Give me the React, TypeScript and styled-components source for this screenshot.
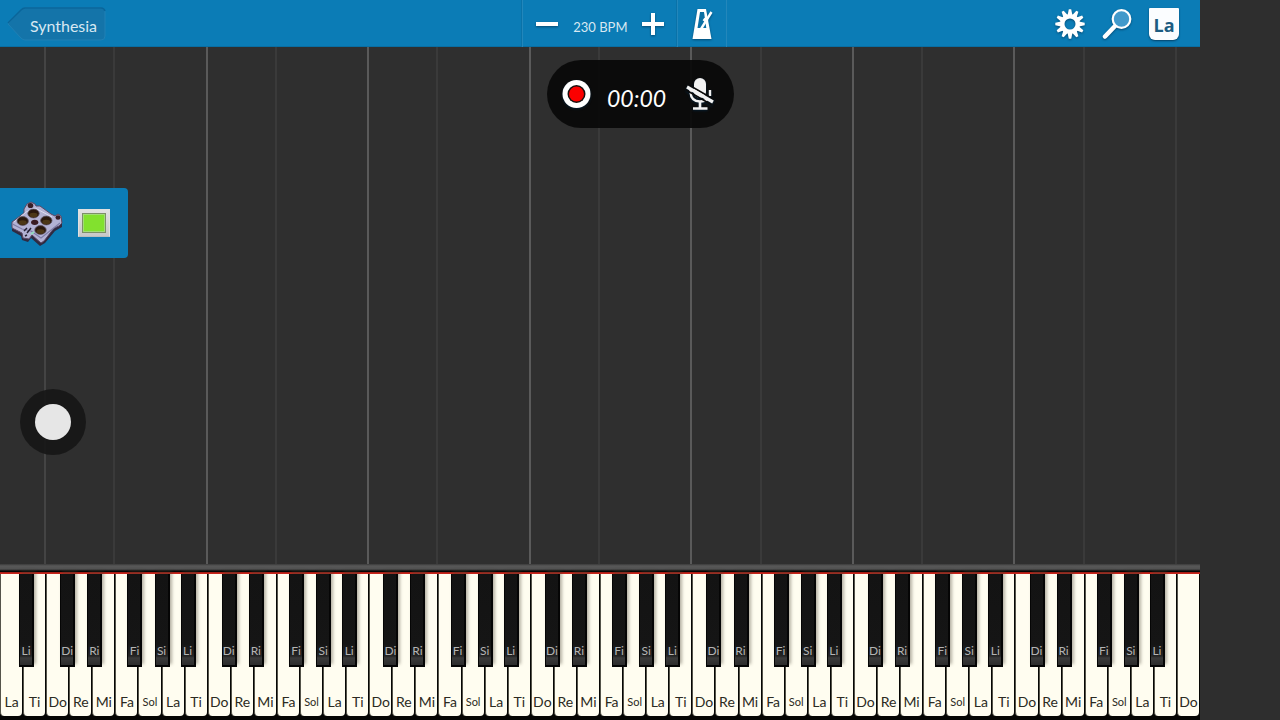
import React from 'react';
import styled, { createGlobalStyle } from 'styled-components';

const GlobalStyle = createGlobalStyle`
  *, *::before, *::after { box-sizing: border-box; }
  html, body { margin: 0; background: #2e2e2e; }
  body { font-family: Lato, "Liberation Sans", sans-serif; color: #fff; }
  button { font: inherit; color: inherit; border: 0; background: none; padding: 0; cursor: pointer; }
  svg { display: block; }
`;

const Screen = styled.main`
  position: relative;
  display: flex;
  flex-direction: column;
  min-height: 100vh;
  padding-right: 80px;
`;

const Toolbar = styled.header`
  display: grid;
  grid-template-columns: 21fr auto 19fr;
  height: 47px;
  background: #0b7cb6;
  box-shadow: inset 0 -1px 0 #096ea3;
`;

const ToolbarStart = styled.div`
  display: flex;
  align-items: center;
  padding-left: 7px;
`;

const ToolbarEnd = styled.div`
  display: flex;
  align-items: center;
  justify-content: flex-end;
  gap: 16px;
  padding-right: 21px;
`;

const BackButton = styled.button`
  display: grid;
  width: 99px;
  height: 34px;
  color: #d8e8f2;
  font-size: 16px;
  line-height: 34px;

  > * { grid-area: 1 / 1; }
  span { padding: 2px 0 0 14px; }
`;

const ToolbarSection = styled.div<{ $gap?: number }>`
  display: flex;
  align-items: center;
  gap: ${(p) => p.$gap ?? 0}px;
  padding: 1px 13px 0;
  border-left: 1px solid #2387bb;
  box-shadow: -1px 0 0 #0a72a8;
`;

const Centre = styled.div`
  display: flex;
  border-right: 1px solid #2387bb;
`;

const Tempo = styled.output`
  width: 60px;
  padding-top: 5px;
  color: #d8e8f2;
  font-size: 13px;
  line-height: 16px;
  text-align: center;
  white-space: nowrap;
`;

const IconButton = styled.button`
  display: flex;
  align-items: center;
  justify-content: center;

  svg { filter: drop-shadow(0 1px 1px rgba(0, 40, 70, 0.6)); }
`;

const LabelToggle = styled.button`
  width: 30px;
  height: 32px;
  padding-top: 2px;
  border-radius: 1px 1px 6px 6px;
  background: #fbfdff;
  box-shadow: 0 1px 2px rgba(0, 40, 70, 0.7);
  color: #1c5c82;
  font: 700 18px/28px "Open Sans", sans-serif;
`;

const Stage = styled.section`
  position: relative;
  display: flex;
  flex: 1;
  min-height: 420px;
  background: #2f2f2f;
`;

const laneColours = { soft: '#444', strong: '#5a5a5a', faint: '#3a3a3a', none: 'transparent' };

const Lane = styled.div<{ $keys: number; $edge: keyof typeof laneColours }>`
  flex: ${(p) => p.$keys} 1 0;
  box-shadow: inset -2px 0 0 ${(p) => laneColours[p.$edge]};
`;

const InstrumentPanel = styled.div`
  position: absolute;
  top: 141px;
  left: 0;
  display: flex;
  align-items: center;
  gap: 14px;
  width: 128px;
  height: 70px;
  padding-left: 10px;
  border-radius: 0 4px 4px 0;
  background: #0b7cb6;
`;

const PadToggle = styled.input`
  appearance: none;
  width: 32px;
  height: 28px;
  margin: 0;
  padding: 3px;
  border: 1px solid #e0e0e0;
  border-bottom-color: #bcbcbc;
  background: linear-gradient(#e2e2e2, #c8c8c8);

  &::before {
    content: '';
    display: block;
    height: 20px;
    border: 1px solid #7d8f68;
    background: #b5ec8a;
    box-shadow: inset 0 0 0 1px #a2dd75;
  }
  &:checked::before { background: #82e12e; }
`;

const FloatingKnob = styled.button`
  position: absolute;
  top: 342px;
  left: 20px;
  display: flex;
  align-items: center;
  justify-content: center;
  width: 66px;
  height: 66px;
  border-radius: 50%;
  background: rgba(22, 22, 22, 0.9);

  &::before {
    content: '';
    width: 36px;
    height: 36px;
    border-radius: 50%;
    background: #e6e6e6;
  }
`;

const Recorder = styled.div`
  position: absolute;
  top: 60px;
  left: 50%;
  display: flex;
  align-items: center;
  gap: 16px;
  width: 187px;
  height: 68px;
  margin-left: -93px;
  padding-left: 15px;
  border-radius: 34px;
  background: rgba(10, 10, 10, 0.94);
`;

const Elapsed = styled.time`
  width: 63px;
  padding-top: 8px;
  font-size: 23px;
  font-style: italic;
  line-height: 28px;
`;

const FallBoard = styled.div`
  height: 9px;
  background: linear-gradient(#3a3a3a, #585858 2px, #525252 5px, #333 6px, #050505 7px);
  border-bottom: 1px solid #a81e16;
`;

const Keyboard = styled.div`
  display: flex;
  height: 147px;
  padding-bottom: 4px;
  background: #060604;
  border-top: 1px solid #c8261c;
`;

const KeySlot = styled.div`
  position: relative;
  display: flex;
  flex: 1 1 0;
  min-width: 0;
`;

const WhiteKey = styled.button<{ $small: boolean }>`
  flex: 1;
  min-width: 0;
  margin-right: 1px;
  padding-top: 113px;
  border-left: 1px solid #55544a;
  border-radius: 0 0 4px 4px;
  background: #fffdf0;
  color: #2b2a22;
  font-size: ${(p) => (p.$small ? 11 : 14)}px;
  line-height: 24px;
  white-space: nowrap;
`;

const BlackKey = styled.button<{ $shift: number }>`
  position: absolute;
  z-index: 1;
  top: 0;
  left: calc(100% - 7px + ${(p) => p.$shift}px);
  width: 15px;
  height: 93px;
  padding-top: 62px;
  border: solid #050505;
  border-width: 0 2px 2px 1px;
  background: linear-gradient(#131313 0, #151515 70px, #242424 82px, #3a3a3a 84px, #2a2a2a 92px);
  box-shadow: 2px -3px 3px rgba(70, 65, 50, 0.4);
  color: #b4b4b4;
  font-size: 12px;
  line-height: 16px;
  text-align: center;
`;

type Sharp = { name: string; shift: number };
const sharps: Record<string, Sharp> = {
  Do: { name: 'Di', shift: -2 },
  Re: { name: 'Ri', shift: 2 },
  Fa: { name: 'Fi', shift: -4 },
  Sol: { name: 'Si', shift: 0 },
  La: { name: 'Li', shift: 3 },
};

const octave = ['Do', 'Re', 'Mi', 'Fa', 'Sol', 'La', 'Ti'];
const notes = ['La', 'Ti', ...Array.from({ length: 7 }, () => octave).flat(), 'Do'];

const lanes: { keys: number; edge: keyof typeof laneColours }[] = [
  { keys: 2, edge: 'soft' },
  ...Array.from({ length: 6 }, () => [
    { keys: 3, edge: 'faint' as const },
    { keys: 4, edge: 'strong' as const },
  ]).flat(),
  { keys: 3, edge: 'faint' },
  { keys: 4, edge: 'faint' },
  { keys: 1, edge: 'none' },
];

const BackShape = () => (
  <svg width="99" height="34" viewBox="0 0 99 34" aria-hidden="true">
    <path d="M1 17 14 3Q16 1 18 1H94Q98 1 98 5V29Q98 33 94 33H18Q16 33 14 31Z" fill="#1474a9" stroke="#2080b4" />
    <path d="M1 16 14 3Q16 1 18 1H94Q97 1 98 4" fill="none" stroke="#0a659a" strokeWidth="1.500" />
  </svg>
);

const Bar = ({ plus = false }) => (
  <svg width="22" height="22" viewBox="0 0 22 22" fill="#fff" aria-hidden="true">
    <rect x="0" y="9" width="22" height="4" />
    {plus && <rect x="9" y="0" width="4" height="22" />}
  </svg>
);

const Metronome = () => (
  <svg width="22" height="32" viewBox="0 0 22 32" aria-hidden="true">
    <path d="M6.500 1H15L20.500 31H1.500Z" fill="#fff" />
    <path d="M9 4H13L15.300 20H6.500Z" fill="#0b6fa4" />
    <path d="M10 21 20.500 4" stroke="#fff" strokeWidth="2.400" />
    <path d="M12.500 11 16.500 14" stroke="#fff" strokeWidth="3" />
  </svg>
);

const Gear = () => (
  <svg width="30" height="30" viewBox="-15 -15 30 30" aria-hidden="true">
    {Array.from({ length: 12 }, (_, i) => (
      <path key={i} d="M-2.400 -9 -1.200 -14.700H1.200L2.400 -9Z" transform={`rotate(${i * 30})`} fill="#fff" />
    ))}
    <circle r="7.800" fill="none" stroke="#fff" strokeWidth="4.600" />
  </svg>
);

const Magnifier = () => (
  <svg width="32" height="32" viewBox="0 0 32 32" aria-hidden="true">
    <path d="M14.500 17.500 4 28.500" stroke="#fff" strokeWidth="4.500" strokeLinecap="round" />
    <circle cx="20.500" cy="11" r="8.800" fill="#4199cb" stroke="#fff" strokeWidth="2.200" />
  </svg>
);

const RecordMark = () => (
  <svg width="29" height="29" viewBox="0 0 29 29" aria-hidden="true">
    <circle cx="14.500" cy="14" r="14" fill="#fff" />
    <circle cx="14.500" cy="14" r="9" fill="#16100f" />
    <circle cx="14.500" cy="14" r="7.500" fill="#fb0000" />
  </svg>
);

const MutedMic = () => (
  <svg width="28" height="34" viewBox="0 0 28 34" aria-hidden="true">
    <path d="M8 7a6 6 0 0 1 12 0V15a6 6 0 0 1-12 0Z" fill="#f2f2f2" />
    <path d="M4.500 13V15Q5 24.500 14 24.500 19 24.500 21.500 22M24 19V13" fill="none" stroke="#f2f2f2" strokeWidth="2.400" />
    <path d="M14 24V31M7 31.500H21.500" stroke="#f2f2f2" strokeWidth="2.600" />
    <path d="M0 13 26 28M2 7.500 28 22.500" stroke="#0b0b0b" strokeWidth="1.600" />
    <path d="M1 10 27 25" stroke="#f2f2f2" strokeWidth="3.200" />
  </svg>
);

const DrumPad = () => (
  <svg width="54" height="48" viewBox="0 0 54 48" aria-hidden="true">
    <path d="M2 26V32L11 37 12 41 18 43 21 39 30 47 35 44 45 32 52 28V20L46 28Z" fill="#2f2b42" />
    <path d="M14 10 17 5 21 3 25 5 26 7 30 7 41 15 45 17 48 15 51 17 52 24 49 27 44 29 34 42 31 44 22 36 19 40 13 39 12 34 2 29V23L14 14Z" fill="#b3b2d4" stroke="#5b4763" />
    <path d="M2.500 25 12 30 21 32 31 39 50 24" fill="none" stroke="#7f7da6" strokeWidth="1.200" />
    <path d="M4 23 16 13 25 9 42 18" fill="none" stroke="#dddcf0" />
    <g fill="#2a180e" stroke="#5c5260" strokeWidth="0.800">
      <ellipse cx="23.500" cy="14.500" rx="5.700" ry="4.400" />
      <ellipse cx="12.700" cy="22" rx="5.700" ry="4.400" />
      <ellipse cx="36.300" cy="21.500" rx="5.700" ry="4.400" />
      <ellipse cx="30.500" cy="31" rx="5.700" ry="4.400" />
    </g>
    <g fill="#4c3717">
      <ellipse cx="23.500" cy="16" rx="4" ry="2.300" />
      <ellipse cx="12.700" cy="23.500" rx="4" ry="2.300" />
      <ellipse cx="36.300" cy="23" rx="4" ry="2.300" />
      <ellipse cx="30.500" cy="32.500" rx="4" ry="2.300" />
    </g>
    <ellipse cx="24.700" cy="23.300" rx="3.600" ry="2.600" fill="#3a1b22" />
    <ellipse cx="20.500" cy="6.500" rx="2.800" ry="2.600" fill="#371e26" />
    <ellipse cx="48" cy="18.500" rx="2.500" ry="2.200" fill="#371e26" />
    <path d="M14 32 17 29M17 34 21 29M15 37 17 36" stroke="#262033" strokeWidth="1.500" />
    <path d="M21 35 24 33" stroke="#8fe3bd" strokeWidth="1.600" />
  </svg>
);

export default function App() {
  return (
    <>
      <GlobalStyle />
      <Screen>
        <Toolbar>
          <ToolbarStart>
            <BackButton>
              <BackShape />
              <span>Synthesia</span>
            </BackButton>
          </ToolbarStart>
          <Centre>
            <ToolbarSection $gap={12}>
              <IconButton aria-label="Slower"><Bar /></IconButton>
              <Tempo>230 BPM</Tempo>
              <IconButton aria-label="Faster"><Bar plus /></IconButton>
            </ToolbarSection>
            <ToolbarSection>
              <IconButton aria-label="Metronome"><Metronome /></IconButton>
            </ToolbarSection>
          </Centre>
          <ToolbarEnd>
            <IconButton aria-label="Settings"><Gear /></IconButton>
            <IconButton aria-label="Zoom"><Magnifier /></IconButton>
            <LabelToggle aria-label="Note labels">La</LabelToggle>
          </ToolbarEnd>
        </Toolbar>

        <Stage>
          {lanes.map((lane, i) => (
            <Lane key={i} $keys={lane.keys} $edge={lane.edge} />
          ))}
          <InstrumentPanel>
            <DrumPad />
            <PadToggle type="checkbox" defaultChecked aria-label="Drum pad" />
          </InstrumentPanel>
          <FloatingKnob aria-label="Assistive menu" />
        </Stage>

        <FallBoard />
        <Keyboard>
          {notes.map((note, i) => {
            const sharp = i < notes.length - 1 ? sharps[note] : undefined;
            return (
              <KeySlot key={i}>
                <WhiteKey $small={note === 'Sol'}>{note}</WhiteKey>
                {sharp && <BlackKey $shift={sharp.shift}>{sharp.name}</BlackKey>}
              </KeySlot>
            );
          })}
        </Keyboard>

        <Recorder>
          <IconButton aria-label="Record"><RecordMark /></IconButton>
          <Elapsed>00:00</Elapsed>
          <IconButton aria-label="Microphone off"><MutedMic /></IconButton>
        </Recorder>
      </Screen>
    </>
  );
}
